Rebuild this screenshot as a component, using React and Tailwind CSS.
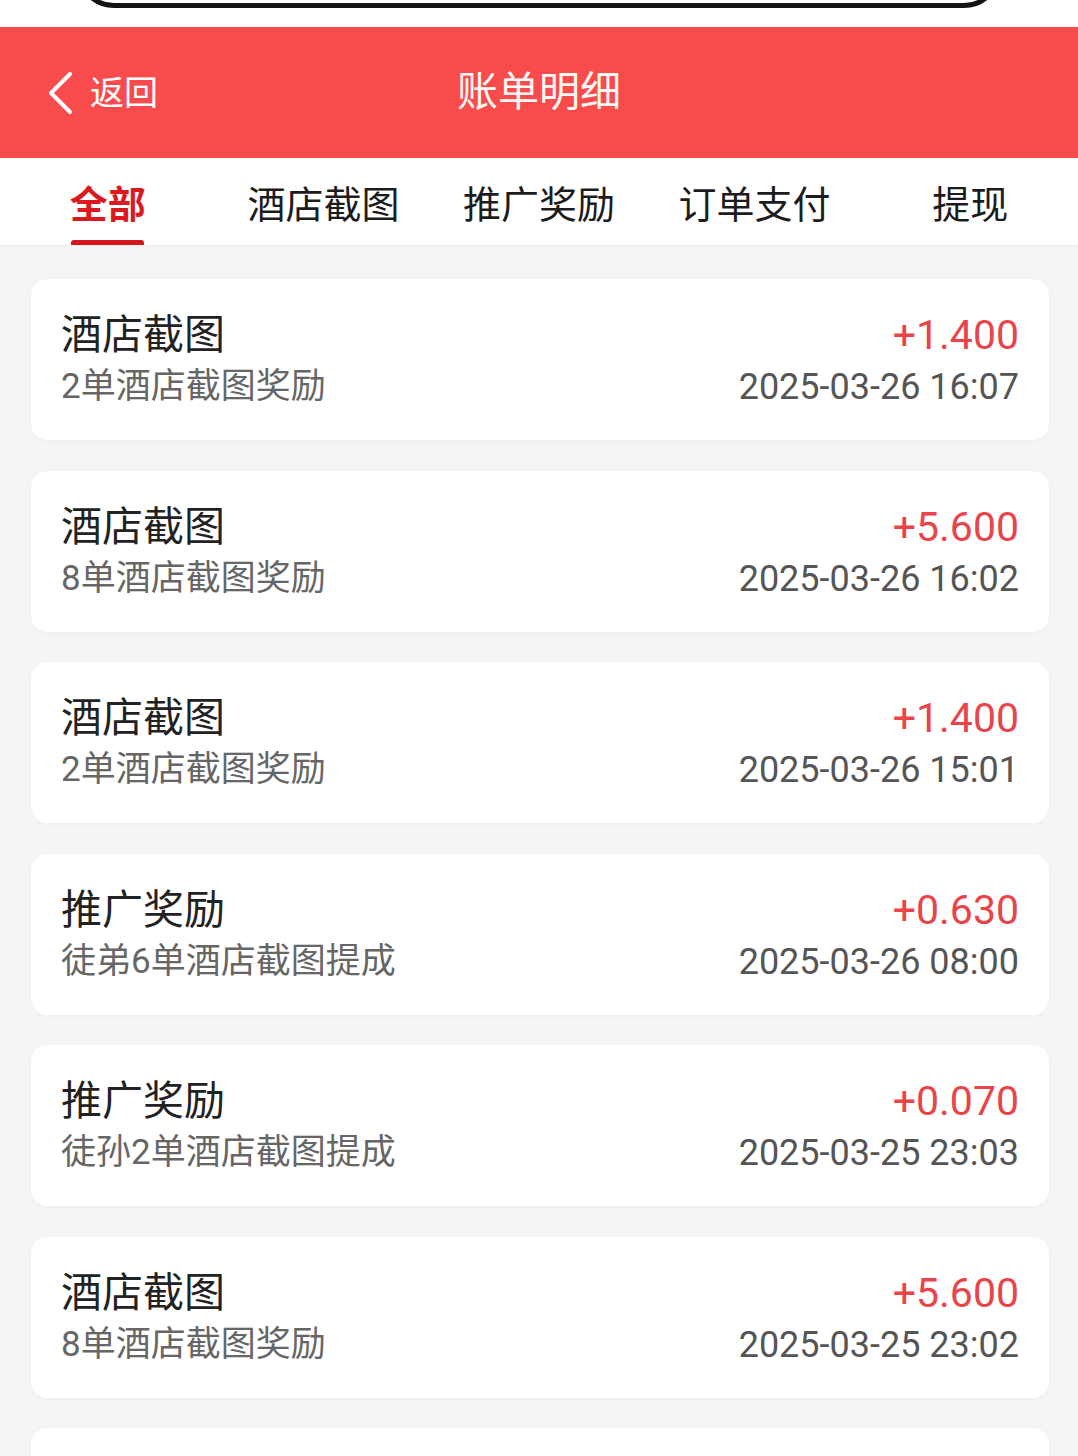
import { useState } from 'react'

const TABS = ['全部', '酒店截图', '推广奖励', '订单支付', '提现']

const RECORDS = [
  { id: 1, type: '酒店截图', note: '2单酒店截图奖励', amount: '+1.400', time: '2025-03-26 16:07' },
  { id: 2, type: '酒店截图', note: '8单酒店截图奖励', amount: '+5.600', time: '2025-03-26 16:02' },
  { id: 3, type: '酒店截图', note: '2单酒店截图奖励', amount: '+1.400', time: '2025-03-26 15:01' },
  { id: 4, type: '推广奖励', note: '徒弟6单酒店截图提成', amount: '+0.630', time: '2025-03-26 08:00' },
  { id: 5, type: '推广奖励', note: '徒孙2单酒店截图提成', amount: '+0.070', time: '2025-03-25 23:03' },
  { id: 6, type: '酒店截图', note: '8单酒店截图奖励', amount: '+5.600', time: '2025-03-25 23:02' },
]

export default function App() {
  const [active, setActive] = useState(0)

  return (
    <div className="h-screen overflow-hidden bg-[#f5f5f5] font-['Roboto','Noto_Sans_CJK_SC',sans-serif]">
      {/* status strip with device frame edge */}
      <div className="h-[27px] bg-white overflow-hidden">
        <div className="mx-[76px] -mt-[40px] h-[48px] border-[5px] border-[#141414] rounded-b-[38px]" />
      </div>

      {/* header */}
      <div className="h-[131px] bg-[#f84c4c] flex items-center relative">
        <div className="flex items-center pl-[47px] gap-[17px] text-white">
          <svg width="26" height="44" viewBox="0 0 26 44" fill="none">
            <path d="M23 3 L4 22 L23 41" stroke="#fff" strokeWidth="4" strokeLinecap="round" strokeLinejoin="round" />
          </svg>
          <span className="text-[34px] leading-none">返回</span>
        </div>
        <div className="absolute inset-x-0 text-center text-[41px] leading-none text-[#fff8f4] pointer-events-none">账单明细</div>
      </div>

      {/* tabs */}
      <div className="h-[88px] bg-white flex border-b border-[#ececec]">
        {TABS.map((t, i) => (
          <button key={t} onClick={() => setActive(i)} className="flex-1 flex flex-col items-center justify-end">
            <span className={`text-[38px] leading-none pb-[16px] ${active === i ? 'text-[#dc1820] font-bold' : 'text-[#1c1c1c]'}`}>{t}</span>
            <span className={`h-[5px] w-[73px] rounded-t-[3px] ${active === i ? 'bg-[#d7151d]' : 'bg-transparent'}`} />
          </button>
        ))}
      </div>

      {/* list */}
      <div className="pl-[31px] pr-[29px] pt-[33px] flex flex-col gap-[30.5px]">
        {RECORDS.map(r => (
          <div key={r.id} className="h-[161px] bg-white rounded-[16px] shadow-[0_1px_4px_rgba(0,0,0,0.04)] pl-[30px] pr-[30px] pt-[3px] flex items-center justify-between">
            <div className="flex flex-col">
              <span className="text-[41px] leading-[52px] text-[#222]">{r.type}</span>
              <span className="text-[35px] leading-[52px] text-[#666]">{r.note}</span>
            </div>
            <div className="flex flex-col items-end">
              <span className="text-[41px] leading-[52px] text-[#e8444a]">{r.amount}</span>
              <span className="text-[36px] leading-[52px] text-[#555]">{r.time}</span>
            </div>
          </div>
        ))}
        {/* next card, only its top edge is in view */}
        <div className="h-[161px] bg-white rounded-[16px] shadow-[0_1px_4px_rgba(0,0,0,0.04)]" />
      </div>
    </div>
  )
}
